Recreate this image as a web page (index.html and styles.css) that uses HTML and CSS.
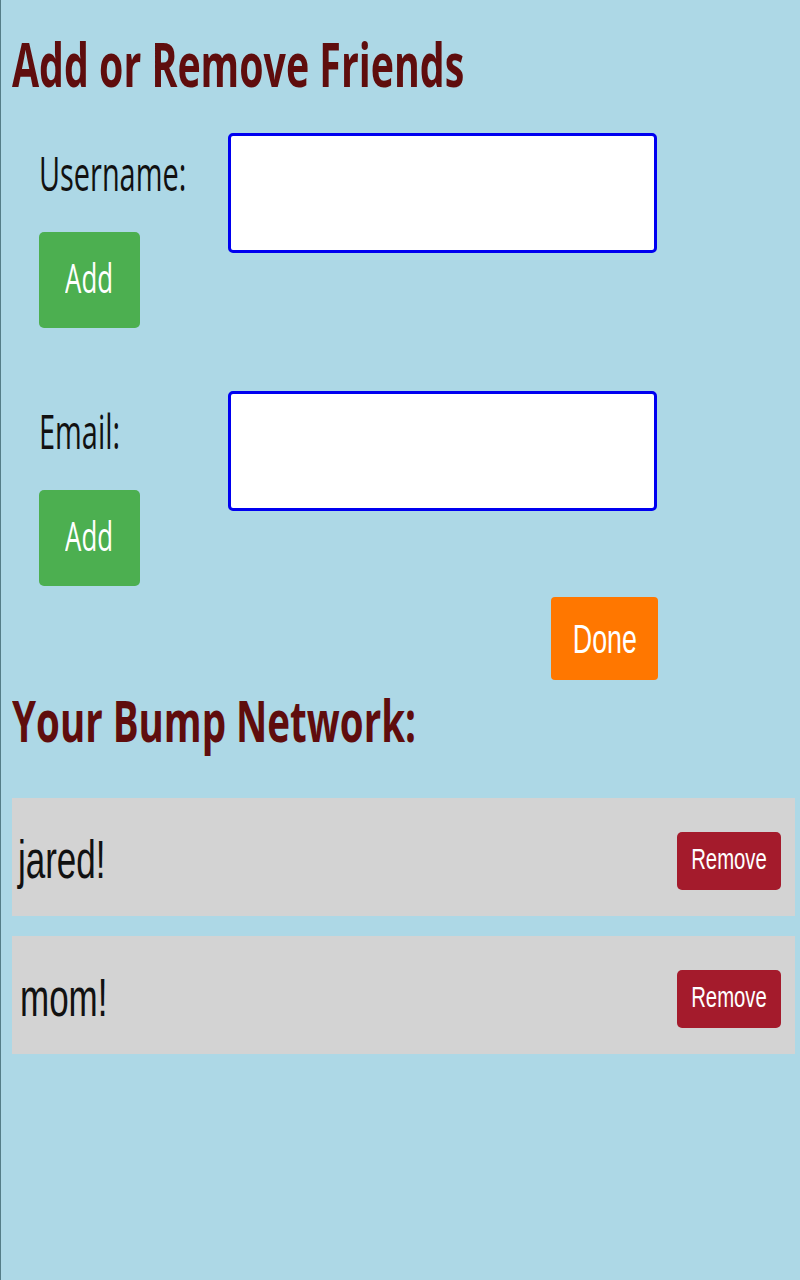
FILE: index.html
```html
<!DOCTYPE html>
<html lang="en">
<head>
<meta charset="utf-8">
<title>Add or Remove Friends</title>
<link rel="stylesheet" href="styles.css">
</head>
<body>
<main class="page">
  <h1 class="title"><span class="sq sq-title">Add or Remove Friends</span></h1>

  <div class="field field-first">
    <div class="field-side">
      <label class="label" for="username"><span class="sq sq-label">Username:</span></label>
      <button class="btn-add" type="button"><span class="sq-c sq-add">Add</span></button>
    </div>
    <input id="username" class="text-input" type="text">
  </div>

  <div class="field field-second">
    <div class="field-side">
      <label class="label" for="email"><span class="sq sq-label">Email:</span></label>
      <button class="btn-add" type="button"><span class="sq-c sq-add">Add</span></button>
    </div>
    <input id="email" class="text-input" type="text">
  </div>

  <div class="actions">
    <button class="btn-done" type="button"><span class="sq-c sq-done">Done</span></button>
  </div>

  <h2 class="title title-net"><span class="sq sq-net">Your Bump Network:</span></h2>

  <ul class="friends">
    <li class="friend">
      <span class="friend-name"><span class="sq sq-name">jared!</span></span>
      <button class="btn-remove" type="button"><span class="sq-c sq-remove">Remove</span></button>
    </li>
    <li class="friend">
      <span class="friend-name friend-name-alt"><span class="sq sq-name">mom!</span></span>
      <button class="btn-remove" type="button"><span class="sq-c sq-remove">Remove</span></button>
    </li>
  </ul>
</main>
</body>
</html>
```
FILE: styles.css
```css
html, body {
  margin: 0;
  padding: 0;
  background: #add8e6;
}

body {
  border-left: 1px solid #557d87;
  min-height: 1280px;
  box-sizing: border-box;
  font-family: "Open Sans", "Noto Sans", sans-serif;
}

.page {
  padding: 34px 5px 0 11px;
}

/* horizontally condensed text, as in the reference */
.sq {
  display: inline-block;
  transform-origin: left center;
  white-space: nowrap;
}

.sq-c {
  display: inline-block;
  transform-origin: center center;
  white-space: nowrap;
}

.sq-title { transform: scaleX(0.655); }
.sq-net { transform: scaleX(0.664); }
.sq-label { transform: scaleX(0.615); }
.sq-add { transform: scaleX(0.63); }
.sq-done { transform: scaleX(0.67); }
.sq-name { transform: scaleX(0.66); }
.sq-remove { transform: scaleX(0.7); }

.title {
  margin: 0;
  color: #5f0d0d;
  font-family: "Open Sans", sans-serif;
  font-weight: 700;
  font-size: 60px;
  line-height: 60px;
  white-space: nowrap;
}

.title-net {
  margin-top: 11px;
  font-size: 58px;
  line-height: 58px;
}

.field {
  display: flex;
  align-items: flex-start;
  margin-left: 27px;
}

.field-first { margin-top: 39px; }
.field-second { margin-top: 63px; }

.field-side {
  width: 189px;
  padding-top: 17px;
  display: flex;
  flex-direction: column;
  align-items: flex-start;
  gap: 35px;
}

.label {
  display: block;
  height: 47px;
  font-family: "Open Sans", sans-serif;
  font-size: 47px;
  line-height: 47px;
  color: #111;
  white-space: nowrap;
}

.text-input {
  width: 429px;
  height: 120px;
  box-sizing: border-box;
  border: 3px solid #0000f0;
  border-radius: 5px;
  background: #fff;
  margin: 0;
  padding: 0;
  outline: none;
}

.btn-add {
  width: 101px;
  height: 96px;
  padding: 0 0 6px;
  margin: 0;
  border: none;
  border-radius: 5px;
  background: #4caf50;
  color: #fff;
  font-family: "Open Sans", sans-serif;
  font-size: 41px;
  line-height: 41px;
  display: flex;
  align-items: center;
  justify-content: center;
}

.actions {
  width: 646px;
  margin-top: 11px;
  display: flex;
  justify-content: flex-end;
}

.btn-done {
  width: 107px;
  height: 83px;
  padding: 0;
  margin: 0;
  border: none;
  border-radius: 4px;
  background: #ff7700;
  color: #fff;
  font-family: "Liberation Sans", Arial, sans-serif;
  font-size: 40px;
  line-height: 40px;
  display: flex;
  align-items: center;
  justify-content: center;
}

.friends {
  list-style: none;
  margin: 49px 0 0;
  padding: 0;
  display: flex;
  flex-direction: column;
  gap: 20px;
}

.friend {
  height: 118px;
  box-sizing: border-box;
  background: #d3d3d3;
  padding: 0 14px 0 6px;
  display: flex;
  align-items: center;
  justify-content: space-between;
}

.friend-name {
  margin-top: 5px;
  font-family: "Liberation Sans", Arial, sans-serif;
  font-size: 53px;
  line-height: 53px;
  color: #111;
}

.friend-name-alt {
  margin-left: 2px;
}

.btn-remove {
  width: 104px;
  height: 58px;
  margin: 8px 0 0;
  padding: 0 0 4px;
  border: none;
  border-radius: 5px;
  background: #a41b2c;
  color: #fff;
  font-family: "Liberation Sans", Arial, sans-serif;
  font-size: 29px;
  line-height: 29px;
  display: flex;
  align-items: center;
  justify-content: center;
}
```
